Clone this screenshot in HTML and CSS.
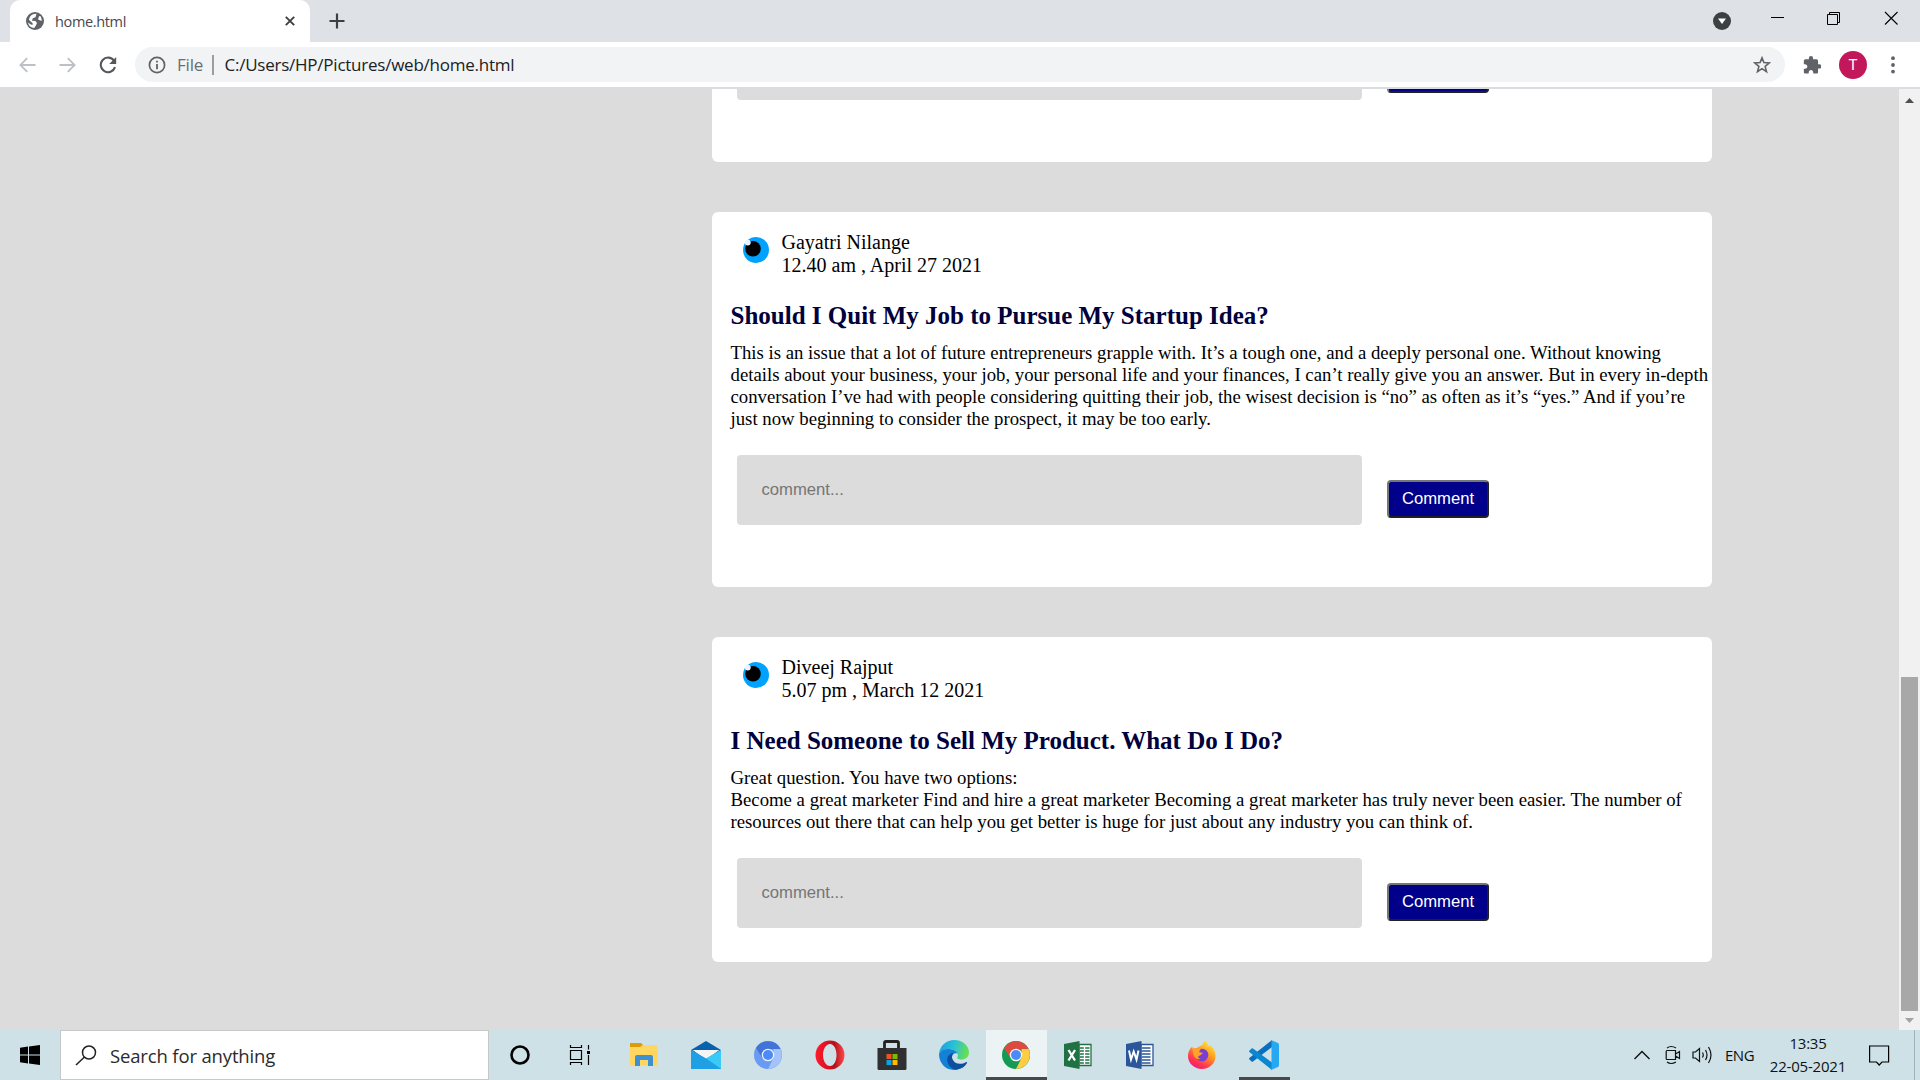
FILE: index.html
```html
<!DOCTYPE html>
<html lang="en">
<head>
<meta charset="utf-8">
<title>home.html</title>
<link rel="stylesheet" href="styles.css">
</head>
<body>
<div class="desktop">
  <header class="tabstrip">
    <div class="tab">
      <svg class="globe" width="18" height="18" viewBox="0 0 18 18"><circle cx="9" cy="9" r="9" fill="#5f6368"/><path d="M10.5 1.8 L9.5 5.2 L6.8 6.3 L6 8.7 L9.5 9 L11 11 L10 13.2 L8.3 16 Q3 15.5 2 10.5 L5.2 12.8 L7 12.4 L6.4 11 L3 8 Q3.2 3.2 8 1.9Z M13 4.2 L12 7.4 L15.8 9 Q16 6 14.3 3.9Z" fill="#fff"/></svg>
      <span class="tab-title">home.html</span>
      <svg class="tab-close" width="10" height="10" viewBox="0 0 10 10"><path d="M.8.8 9.2 9.2M9.2.8.8 9.2" stroke="#3c4043" stroke-width="1.9"/></svg>
    </div>
    <svg class="new-tab" width="16" height="16" viewBox="0 0 16 16"><path d="M8 .5V15.5M.5 8H15.5" stroke="#3c4043" stroke-width="2.2"/></svg>
    <div class="window-controls">
      <svg class="tab-search" width="18" height="18" viewBox="0 0 18 18"><circle cx="9" cy="9" r="9" fill="#3c4043"/><path d="M5 6.5H13L9 12Z" fill="#fff"/></svg>
      <svg width="56" height="42" viewBox="0 0 56 42"><path d="M22 17.5H35" stroke="#000"/></svg>
      <svg width="56" height="42" viewBox="0 0 56 42"><path d="M22.5 14.5H32.5V24.5H22.5ZM24.5 14V12.5H34.5V22.5H33" fill="none" stroke="#000"/></svg>
      <svg width="56" height="42" viewBox="0 0 56 42"><path d="M24 12 36.5 24.5M36.5 12 24 24.5" stroke="#000" stroke-width="1.1"/></svg>
    </div>
  </header>
  <nav class="toolbar">
    <svg class="back" width="17" height="16" viewBox="0 0 17 16"><path d="M16.5 8H2M8.2 1.2 1.4 8 8.2 14.8" fill="none" stroke="#bdc0c4" stroke-width="1.8"/></svg>
    <svg class="forward" width="17" height="16" viewBox="0 0 17 16"><path d="M.5 8H15M8.8 1.2 15.6 8 8.8 14.8" fill="none" stroke="#bdc0c4" stroke-width="1.8"/></svg>
    <svg class="reload" width="18" height="18" viewBox="0 0 18 18"><path d="M15 4.6A7.3 7.3 0 1 0 16 11.2" fill="none" stroke="#54585d" stroke-width="2.1"/><path d="M17.2 1V8H10.2Z" fill="#54585d"/></svg>
    <div class="omnibox">
      <svg class="info" width="18" height="18" viewBox="0 0 18 18"><circle cx="9" cy="9" r="7.6" fill="none" stroke="#5f6368" stroke-width="1.7"/><path d="M9 8V13.2M9 4.7V6.5" stroke="#5f6368" stroke-width="1.8"/></svg>
      <span class="scheme">File</span>
      <span class="divider"></span>
      <span class="url">C:/Users/HP/Pictures/web/home.html</span>
      <svg class="star" width="18" height="18" viewBox="0 0 18 18"><path d="M9 1.9 10.9 6.6 16.2 7 12.1 10.4 13.5 15.6 9 12.7 4.5 15.6 5.9 10.4 1.8 7 7.1 6.6Z" fill="none" stroke="#5f6368" stroke-width="1.6"/></svg>
    </div>
    <svg class="puzzle" width="18" height="18" viewBox="1 1 21.5 21.5"><path d="M20.5 11H19V7c0-1.1-.9-2-2-2h-4V3.500a2.500 2.500 0 0 0-5 0V5H4c-1.100 0-1.990.900-1.990 2v3.800H3.500c1.490 0 2.700 1.210 2.700 2.700s-1.210 2.700-2.700 2.700H2V20c0 1.100.900 2 2 2h3.800v-1.500c0-1.490 1.210-2.700 2.700-2.700s2.700 1.210 2.700 2.700V22H17c1.100 0 2-.900 2-2v-4h1.500a2.500 2.500 0 0 0 0-5z" fill="#5f6368"/></svg>
    <span class="profile">T</span>
    <svg class="dots" width="4" height="18" viewBox="0 0 4 18"><circle cx="2" cy="2.200" r="1.900" fill="#5f6368"/><circle cx="2" cy="9" r="1.900" fill="#5f6368"/><circle cx="2" cy="15.600" r="1.900" fill="#5f6368"/></svg>
  </nav>
  <main class="viewport">
    <div class="feed">
      <article class="card card-cut">
        <div class="form">
          <div class="field field-cut"></div>
          <div class="button button-cut"></div>
        </div>
      </article>
      <article class="card card-tall">
        <div class="author">
          <svg class="avatar" width="26" height="26" viewBox="0 0 26 26"><circle cx="13" cy="13" r="13" fill="#00a2ff"/><circle cx="10" cy="11.800" r="7.800" fill="#000"/><circle cx="4.800" cy="5.600" r="2.900" fill="#e9f6ff"/></svg>
          <div>Gayatri Nilange<br>12.40 am , April 27 2021</div>
        </div>
        <h2 class="title">Should I Quit My Job to Pursue My Startup Idea?</h2>
        <p class="text">This is an issue that a lot of future entrepreneurs grapple with. It’s a tough one, and a deeply personal one. Without knowing<br>details about your business, your job, your personal life and your finances, I can’t really give you an answer. But in every in-depth<br>conversation I’ve had with people considering quitting their job, the wisest decision is “no” as often as it’s “yes.” And if you’re<br>just now beginning to consider the prospect, it may be too early.</p>
        <div class="form">
          <div class="field">comment...</div>
          <div class="button">Comment</div>
        </div>
      </article>
      <article class="card card-short">
        <div class="author">
          <svg class="avatar" width="26" height="26" viewBox="0 0 26 26"><circle cx="13" cy="13" r="13" fill="#00a2ff"/><circle cx="10" cy="11.800" r="7.800" fill="#000"/><circle cx="4.800" cy="5.600" r="2.900" fill="#e9f6ff"/></svg>
          <div>Diveej Rajput<br>5.07 pm , March 12 2021</div>
        </div>
        <h2 class="title">I Need Someone to Sell My Product. What Do I Do?</h2>
        <p class="text">Great question. You have two options:<br>Become a great marketer Find and hire a great marketer Becoming a great marketer has truly never been easier. The number of<br>resources out there that can help you get better is huge for just about any industry you can think of.</p>
        <div class="form">
          <div class="field">comment...</div>
          <div class="button">Comment</div>
        </div>
      </article>
    </div>
    <div class="scrollbar">
      <svg width="21" height="21" viewBox="0 0 21 21"><path d="M6 14 10.500 9 15 14Z" fill="#505050"/></svg>
      <span class="thumb"></span>
      <svg width="21" height="19" viewBox="0 0 21 19"><path d="M6 7 10.500 12 15 7Z" fill="#a3a3a3"/></svg>
    </div>
  </main>
  <footer class="taskbar">
    <svg class="start" width="60" height="50" viewBox="0 0 60 50"><path d="M20 17.800 28 16.600V24.500H20ZM29 16.500 40 15V24.500H29ZM20 25.500H28V33.500L20 32.300ZM29 25.500H40V35L29 33.600Z" fill="#000"/></svg>
    <div class="search">
      <svg width="22" height="21" viewBox="0 0 22 21"><circle cx="14" cy="7.500" r="6.500" fill="none" stroke="#222" stroke-width="1.500"/><path d="M9.500 12 1 20" stroke="#222" stroke-width="1.600"/></svg>
      <span>Search for anything</span>
    </div>
    <div class="apps">
      <div class="app"><svg width="30" height="30" viewBox="0 0 30 30"><circle cx="15" cy="15" r="8.500" fill="none" stroke="#000" stroke-width="2.600"/></svg></div>
      <div class="app"><svg width="30" height="30" viewBox="0 0 30 30"><path d="M3.500 10.500H14.500V19.500H3.500ZM3.500 5V7.500H14.500V5M3.500 25V22.500H14.500V25M21.500 5V9.500M21.500 15V25" fill="none" stroke="#000" stroke-width="1.200"/><path d="M20 11H23V14H20Z"/></svg></div>
      <div class="app"><svg width="30" height="30" viewBox="0 0 30 30"><path d="M1 3H12L14 5V9H1Z" fill="#dd9b05"/><path d="M1 7H11L14 5H27Q28.500 5 28.500 7V24Q28.500 25.500 27 25.500H2.500Q1 25.500 1 24Z" fill="#ffd65f"/><path d="M6 26V17Q6 15 8 15H22Q24 15 24 17V26H19V20H11V26Z" fill="#3d91d2"/></svg></div>
      <div class="app"><svg width="30" height="30" viewBox="0 0 30 30"><path d="M0 10 15 1 30 10 15 20Z" fill="#0861ad"/><path d="M2 10H28L15 20Z" fill="#f5f5f5"/><path d="M0 10 15 18.500 30 10V29H0Z" fill="#2aa3e8"/><path d="M2 10H28L15 18.500Z" fill="#f5f5f5"/><path d="M15 18.500 30 10V29Z" fill="#3bc9f7"/><path d="M15 18.500 30 29H0V10Z" fill="#1f9fe4"/></svg></div>
      <div class="app"><svg width="30" height="30" viewBox="0 0 30 30"><circle cx="15" cy="15" r="14" fill="#6a9af2"/><path d="M3 8A14 14 0 0 1 27.500 9H15L9.500 18Z" fill="#4274d8"/><path d="M27.500 9A14 14 0 0 1 15 29L20.500 18V9Z" fill="#a4c3fb"/><circle cx="15" cy="15" r="6.300" fill="#e8f0fe"/><circle cx="15" cy="15" r="5" fill="#4c8bf5"/></svg></div>
      <div class="app"><svg width="30" height="30" viewBox="0 0 30 30"><defs><linearGradient id="op" x1="0" x2="1" y1="0" y2="0"><stop offset="0" stop-color="#ff1b2d"/><stop offset=".5" stop-color="#d30f20"/><stop offset=".65" stop-color="#b3101c"/><stop offset="1" stop-color="#ff4b4b"/></linearGradient></defs><path fill-rule="evenodd" d="M15 .500A14.500 14.500 0 1 0 15 29.500 14.500 14.500 0 1 0 15 .500ZM15 4C19 4 21.500 9 21.500 15S19 26 15 26 8 21 8 15 11 4 15 4Z" fill="url(#op)"/></svg></div>
      <div class="app"><svg width="30" height="30" viewBox="0 0 30 30"><path d="M7.500 10V3Q7.500 1.500 9 1.500H20Q21.500 1.500 21.500 3V10" fill="none" stroke="#222" stroke-width="2.800"/><path d="M.500 8H29.500V28.500Q29.500 30 28 30H2Q.500 30 .500 28.500Z" fill="#303030"/><path d="M9.500 14H14.500V19H9.500Z" fill="#f25022"/><path d="M15.500 14H20.500V19H15.500Z" fill="#7fba00"/><path d="M9.500 20H14.500V25H9.500Z" fill="#00a4ef"/><path d="M15.500 20H20.500V25H15.500Z" fill="#ffb900"/></svg></div>
      <div class="app"><svg width="30" height="30" viewBox="0 0 30 30"><defs><linearGradient id="ed" x1="0" y1=".300" x2="1" y2=".500"><stop offset="0" stop-color="#1b9de2"/><stop offset=".5" stop-color="#2bc3d2"/><stop offset="1" stop-color="#6bdf4b"/></linearGradient></defs><path d="M0 14C1 5 8 0 15 0 24 0 30 6 30 12.500 30 17 26.500 19.500 22.500 19.500 19 19.500 17.500 18.500 18.500 17 20 14 17 9.500 10.500 9 5 8.800 1.500 11 0 14Z" fill="url(#ed)"/><path d="M0 14C2 10 6 8.800 10.500 9 14 9.200 17.500 11 18.500 13.500 15 12.500 12.500 15 13 18.500L19 29.400C8 32 0 24 0 14Z" fill="#1480d6"/><path d="M14.500 12.800C9 14 7.500 18 8.500 22 10 27 14 30 18 29.600 22.500 29 26 26.500 28 23 28.300 22 27.500 21.700 26.800 22.200 22 25 15.500 24 13.500 19.500 12.500 17 13 14.500 14.500 12.800Z" fill="#0d4f9f"/></svg></div>
      <div class="app app-current"><svg width="30" height="30" viewBox="0 0 30 30"><circle cx="15" cy="15" r="14" fill="#159a55"/><path d="M3 8A14 14 0 0 1 27.500 9H15L9.500 18Z" fill="#dd4b3e"/><path d="M27.500 9A14 14 0 0 1 15 29L20.500 18V9Z" fill="#ffcd42"/><circle cx="15" cy="15" r="6.300" fill="#f1f4f5"/><circle cx="15" cy="15" r="5" fill="#4c8bf5"/></svg></div>
      <div class="app"><svg width="30" height="30" viewBox="0 0 30 30"><path d="M16 4.500H28V25.500H16Z" fill="#fff" stroke="#207245" stroke-width="1.300"/><path d="M17 8H26.500M17 11H26.500M17 14H26.500M17 17H26.500M17 20H26.500M17 23H26.500" stroke="#207245" stroke-width="1.600"/><path d="M21.500 6V24" stroke="#fff" stroke-width="1.300"/><path d="M1 4 16.500 1V29L1 26Z" fill="#207245"/><path d="M5.500 10 12 20.500M12 10 5.500 20.500" stroke="#fff" stroke-width="2.300"/></svg></div>
      <div class="app"><svg width="30" height="30" viewBox="0 0 30 30"><path d="M16 4.500H28V25.500H16Z" fill="#fff" stroke="#2b579a" stroke-width="1.300"/><path d="M17 8H25.500M17 11H25.500M17 14H25.500M17 17H25.500M17 20H25.500M17 23H25.500" stroke="#2b579a" stroke-width="1.300"/><path d="M1 4 16.500 1V29L1 26Z" fill="#2b579a"/><path d="M4 10.500 6 19.500 8.700 11.500 11.500 19.500 13.500 10.500" fill="none" stroke="#fff" stroke-width="2"/></svg></div>
      <div class="app"><svg width="30" height="30" viewBox="0 0 30 30"><defs><linearGradient id="ff" x1=".8" y1="0" x2=".2" y2="1"><stop offset="0" stop-color="#fff04a"/><stop offset=".4" stop-color="#ff9a1e"/><stop offset=".75" stop-color="#ff3750"/><stop offset="1" stop-color="#e8148b"/></linearGradient></defs><path d="M15.500 5C16 3 17 1.500 18 .500 20 2 21 4 21.500 6L23.500 5C27 8 28.500 12 28.500 16 28.500 23.500 22.500 29 15 29S1 23.500 1 16C1 12 2.500 9.500 4.500 7L5.500 9 10 8 12 6.500Z" fill="url(#ff)"/><circle cx="15" cy="15" r="6.300" fill="#7a3fd0"/><path d="M5 7 8.500 9 14 8.500 12 12 16 13 13 15.500C10.500 16 10.500 18 13.500 19 10 20 6 17 6 12Z" fill="#ffa12a"/></svg></div>
      <div class="app app-open"><svg width="30" height="30" viewBox="0 0 30 30"><path d="M0 19 2.500 21.500Q3.200 22 4 21.500L23 7V0L.300 18Z" fill="#0a6fbe"/><path d="M0 11 2.500 8.500Q3.200 8 4 8.500L23 22.500V30L.300 12Z" fill="#0b87d0"/><path d="M22 0 29 3Q30 3.500 30 5V25Q30 26.500 29 27L22 30Q22.500 29.500 22.500 28V2Q22.500 .500 22 0Z" fill="#27a9f1"/></svg></div>
    </div>
    <div class="tray">
      <svg class="chevron" width="18" height="12" viewBox="0 0 18 12"><path d="M1.500 10 9 2.500 16.500 10" fill="none" stroke="#111" stroke-width="1.400"/></svg>
      <svg class="meet" width="16" height="20" viewBox="0 0 16 20"><path d="M2 5.500H10.500V14.500H2Q1.200 14.500 1.200 13.500V6.500Q1.200 5.500 2 5.500ZM10.500 9 14.500 6.500V13.500L10.500 11M2 3Q6 0 11 3M2 17Q6 20 11 17" fill="none" stroke="#111" stroke-width="1.200"/></svg>
      <svg class="speaker" width="21" height="20" viewBox="0 0 21 20"><path d="M1 7H3.500L7.500 3.500V16.500L3.500 13H1ZM10.500 7.500Q12 10 10.500 12.500M13.500 5Q16.500 10 13.500 15M16.500 2Q21.500 10 16.500 18" fill="none" stroke="#111" stroke-width="1.200"/></svg>
      <span class="lang">ENG</span>
      <div class="clock">13:35<br>22-05-2021</div>
      <svg class="notice" width="21" height="21" viewBox="0 0 21 21"><path d="M.600 1H19.600V17H13L10.200 20 7.500 17H.600Z" fill="none" stroke="#000" stroke-width="1.200"/></svg>
      <span class="peek"></span>
    </div>
  </footer>
</div>
</body>
</html>
```
FILE: styles.css
```css
* { box-sizing: border-box; }
body { margin: 0; }
svg { display: block; flex: none; }

.desktop {
  width: 1920px;
  height: 1080px;
  display: flex;
  flex-direction: column;
  overflow: hidden;
  font-family: "Open Sans", "Noto Sans", sans-serif;
}

/* Tab strip */
.tabstrip {
  height: 42px;
  flex: none;
  display: flex;
  align-items: center;
  padding-left: 10px;
  background: #dee1e6;
}
.tab {
  width: 300px;
  height: 42px;
  display: flex;
  align-items: center;
  padding: 0 15px 0 16px;
  background: #fff;
  border-radius: 10px 10px 0 0;
}
.tab-title {
  flex: 1;
  margin-left: 11px;
  font-size: 14.5px;
  letter-spacing: -0.35px;
  color: #45494d;
}
.new-tab { margin-left: 19px; }
.window-controls { display: flex; align-items: center; margin: 0 3px 0 auto; }
.tab-search { margin-right: 18px; }

/* Toolbar */
.toolbar {
  height: 47px;
  flex: none;
  display: flex;
  align-items: center;
  padding-left: 19px;
  background: #fff;
  border-bottom: 2px solid #dadce2;
}
.forward { margin-left: 23px; }
.reload { margin-left: 23px; }
.omnibox {
  width: 1650px;
  height: 35px;
  display: flex;
  align-items: center;
  margin-left: 18px;
  padding: 0 14px 0 13px;
  border-radius: 18px;
  background: #f1f3f4;
  font-size: 17px;
}
.scheme { width: 35px; margin-left: 11px; color: #6a6e72; letter-spacing: -0.2px; }
.divider { width: 1.5px; height: 20px; background: #9a9da1; }
.url { flex: 1; margin-left: 11px; color: #202124; letter-spacing: -0.24px; }
.puzzle { margin-left: 18px; }
.profile {
  width: 28px;
  height: 28px;
  margin-left: 18px;
  border-radius: 50%;
  background: #c2185b;
  color: #fff;
  font: 15px/28px Roboto, sans-serif;
  text-align: center;
}
.dots { margin-left: 23.5px; }

/* Page */
.viewport { height: 941px; flex: none; display: flex; background: #dcdcdc; }
.feed {
  flex: 1;
  display: flex;
  flex-direction: column;
  gap: 50px;
  padding-left: 712px;
  font-family: "Liberation Serif", serif;
  color: #000;
}
.card { width: 1000px; background: #fff; border-radius: 6px; }
.card-cut { height: 73px; border-radius: 0 0 6px 6px; }
.card-tall { height: 375px; padding-top: 19px; }
.card-short { height: 325px; padding-top: 19px; }
.author {
  height: 70px;
  display: flex;
  gap: 12.5px;
  padding-left: 31px;
  font-size: 20px;
  line-height: 23px;
  white-space: nowrap;
}
.avatar { margin-top: 6px; }
.title {
  height: 41px;
  margin: 0 0 0 18.5px;
  font-size: 25px;
  line-height: 30px;
  color: #00003c;
  white-space: nowrap;
}
.text {
  margin: 0 0 25px 18.5px;
  font-size: 18.75px;
  line-height: 22px;
  white-space: nowrap;
}
.form {
  display: flex;
  align-items: flex-start;
  gap: 25px;
  padding-left: 25px;
  font: 16.67px/20px "Liberation Sans", sans-serif;
}
.field {
  width: 625px;
  height: 70px;
  padding: 25px 24.5px;
  border-radius: 4px;
  background: #dcdcdc;
  color: #757575;
}
.button {
  width: 102px;
  height: 38px;
  margin-top: 25px;
  border: 2px solid;
  border-color: #767676 #212121 #212121 #767676;
  border-radius: 4px;
  background: #00008b;
  color: #fff;
  line-height: 33px;
  text-align: center;
}
.field-cut { height: 11px; padding: 0; border-radius: 0 0 4px 4px; }
.button-cut { height: 4px; margin: 0; border-top: 0; border-radius: 0 0 4px 4px; }

.scrollbar {
  width: 21px;
  display: flex;
  flex-direction: column;
  align-items: center;
  background: #f1f1f1;
}
.thumb { width: 17px; height: 334px; margin-top: auto; background: #a8a8a8; }

/* Taskbar */
.taskbar { height: 50px; flex: none; display: flex; background: #cde1e7; }
.search {
  width: 429px;
  height: 50px;
  display: flex;
  align-items: center;
  gap: 13px;
  padding-left: 14px;
  background: #fff;
  border: 1px solid #c5c9ca;
  font-size: 18.5px;
  letter-spacing: -0.15px;
  color: #2b2b2b;
}
.apps { display: flex; }
.app { width: 62px; height: 50px; padding: 10px 16px; }
.app-current { background: linear-gradient(#ebf3f5 47px, #464a4c 47px) 1px 0 / 61px 50px no-repeat; }
.app-open { background: linear-gradient(#464a4c, #464a4c) 6px 47px / 51px 3px no-repeat; }
.tray {
  flex: 1;
  display: flex;
  align-items: center;
  justify-content: flex-end;
  color: #111;
  font-size: 15px;
}
.meet { margin-left: 14px; }
.speaker { margin-left: 11px; }
.lang { width: 29px; margin-left: 12px; font-size: 15px; letter-spacing: -0.5px; }
.clock {
  width: 80px;
  margin-left: 14px;
  font-size: 15px;
  line-height: 23px;
  letter-spacing: -0.2px;
  text-align: center;
  white-space: nowrap;
}
.notice { margin-left: 21px; }
.peek { width: 6px; height: 50px; margin-left: 24px; border-left: 1px solid #9fb4bb; }
```
